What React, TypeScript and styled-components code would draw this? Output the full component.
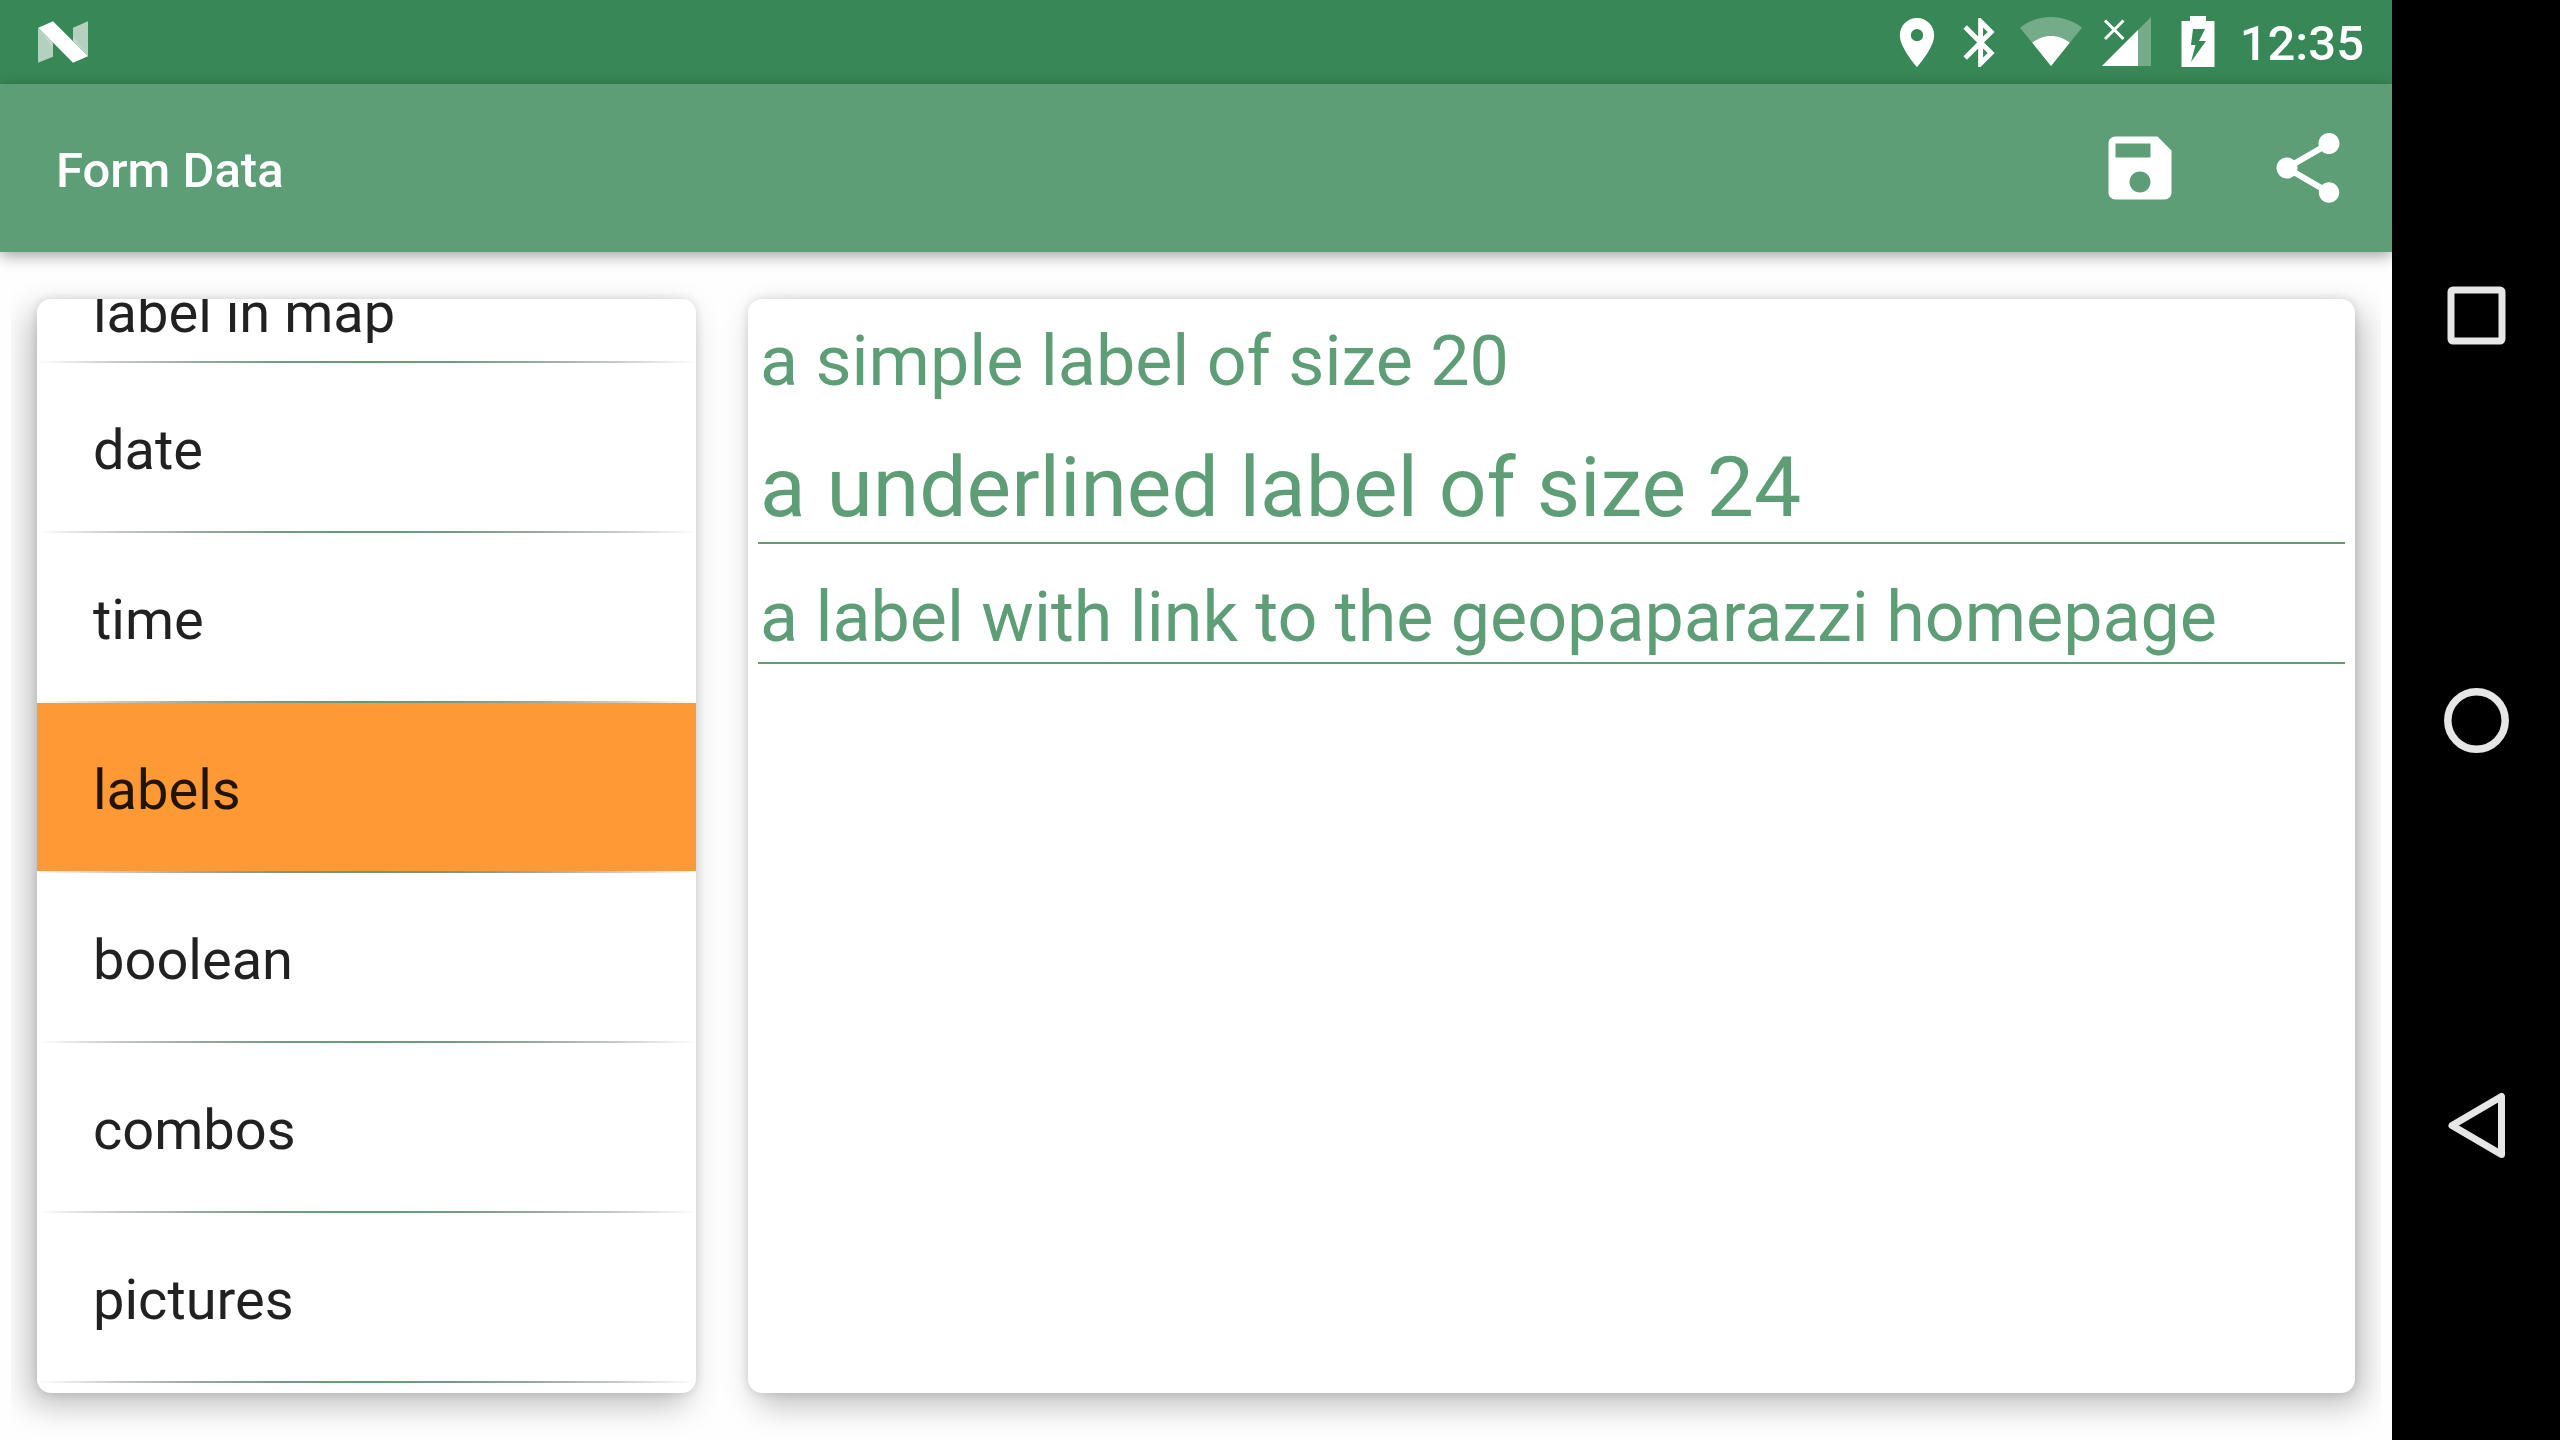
import React, { useState } from "react";
import styled, { createGlobalStyle } from "styled-components";

const GREEN = "#5e9e76";
const GREEN_DARK = "#388756";
const ORANGE = "#ff9933";
const NAV_ICON = "#e6e6e6";

const GlobalStyle = createGlobalStyle`
  * { box-sizing: border-box; }
  body {
    margin: 0;
    background: #fefefe;
    font-family: Roboto, "Liberation Sans", sans-serif;
    text-rendering: optimizeLegibility;
  }
  button {
    margin: 0;
    padding: 0;
    border: 0;
    background: none;
    color: inherit;
    font: inherit;
    cursor: pointer;
  }
`;

const Device = styled.div`
  display: flex;
  height: 100vh;
  overflow: hidden;
`;

const Screen = styled.div`
  flex: 1;
  min-width: 0;
  display: flex;
  flex-direction: column;
`;

const StatusBar = styled.header`
  flex: none;
  display: flex;
  align-items: center;
  justify-content: space-between;
  height: 84px;
  padding: 0 28px 0 38px;
  background: ${GREEN_DARK};
  color: #fff;
`;

const StatusIcons = styled.div`
  display: flex;
  align-items: center;
`;

const StatusIcon = styled.svg`
  display: block;
  height: 84px;
  fill: #fff;
`;

const Clock = styled.time`
  margin-left: 6px;
  font-size: 49px;
  font-weight: 500;
  line-height: 56px;
  padding-top: 4px;
`;

const Toolbar = styled.div`
  flex: none;
  display: flex;
  align-items: center;
  height: 168px;
  padding-left: 56px;
  background: ${GREEN};
  color: #fff;
  box-shadow: 0 4px 14px rgba(0, 0, 0, 0.36);
  z-index: 1;
`;

const Title = styled.h1`
  flex: 1;
  margin: 0;
  padding-top: 6px;
  font-size: 49px;
  font-weight: 500;
  line-height: 56px;
`;

const ActionButton = styled.button`
  display: flex;
  align-items: center;
  justify-content: center;
  width: 168px;
  height: 168px;

  svg {
    width: 84px;
    height: 84px;
    fill: #fff;
  }
`;

const Content = styled.main`
  flex: 1;
  min-height: 0;
  display: flex;
  margin: 0 11px;
  overflow: hidden;
`;

const Pane = styled.div<{ $share: number }>`
  flex: none;
  width: ${(p) => p.$share}%;
  display: flex;
  padding: 47px 26px;
`;

const Card = styled.section<{ $cast: "left" | "right" }>`
  flex: 1;
  min-width: 0;
  display: flex;
  flex-direction: column;
  overflow: hidden;
  border-radius: 14px;
  background: #fff;
  box-shadow:
    0 0 10px rgba(0, 0, 0, 0.12),
    ${(p) => (p.$cast === "left" ? "-8px" : "8px")} 12px 32px rgba(0, 0, 0, 0.26);
`;

const SectionList = styled.nav`
  flex: 1;
  min-height: 0;
  display: flex;
  flex-direction: column;
  justify-content: flex-end;
  padding-bottom: 10px;
`;

const SectionItem = styled.button<{ $selected: boolean; $lowered: boolean }>`
  flex: none;
  height: 168px;
  padding: ${(p) => (p.$lowered ? 72 : 6)}px 56px 0;
  background: ${(p) => (p.$selected ? ORANGE : "transparent")};
  color: rgba(0, 0, 0, 0.87);
  font-size: 56px;
  line-height: 64px;
  text-align: left;
`;

const Divider = styled.div`
  flex: none;
  height: 2px;
  background: linear-gradient(
    90deg,
    rgba(0, 0, 0, 0),
    rgba(23, 39, 29, 0.25) 12.5%,
    rgba(47, 79, 59, 0.5) 25%,
    rgba(70, 118, 88, 0.75) 37.5%,
    ${GREEN} 50%,
    rgba(70, 118, 88, 0.75) 62.5%,
    rgba(47, 79, 59, 0.5) 75%,
    rgba(23, 39, 29, 0.25) 87.5%,
    rgba(0, 0, 0, 0)
  );
`;

const Form = styled.div`
  display: flex;
  flex-direction: column;
  gap: 28px;
  padding: 17px 10px;
`;

const FormLabel = styled.div<{ $large?: boolean; $underlined?: boolean }>`
  padding-left: 2px;
  border-bottom: ${(p) => (p.$underlined ? `2px solid ${GREEN}` : "0")};
  color: ${GREEN};
  font-size: ${(p) => (p.$large ? 84 : 70)}px;
  line-height: ${(p) => (p.$large ? 108 : 90)}px;
`;

const Link = styled.a`
  color: inherit;
  text-decoration: none;
`;

const NavBar = styled.nav`
  flex: none;
  display: flex;
  flex-direction: column;
  width: 168px;
  padding: 113px 0;
  background: #000;
`;

const NavButton = styled.button`
  flex: 1;
  display: flex;
  align-items: center;
  justify-content: center;

  svg {
    width: 72px;
    height: 72px;
    fill: none;
    stroke: ${NAV_ICON};
    stroke-linejoin: round;
  }
`;

const sections = [
  { name: "label in map", lowered: true },
  { name: "date" },
  { name: "time" },
  { name: "labels" },
  { name: "boolean" },
  { name: "combos" },
  { name: "pictures" },
];

function NougatLogo() {
  return (
    <svg width="50" height="42" viewBox="114 63 150 126" fill="#fff" aria-hidden="true">
      <path d="M114 83L159 128V170L114 188Z" opacity=".62" />
      <path d="M264 169L219 123V83L264 64Z" opacity=".62" />
      <path d="M114 83L159 128V143Z" opacity=".2" />
      <path d="M264 169L219 123V108Z" opacity=".2" />
      <path d="M115 83L159 64L264 169L219 188Z" />
    </svg>
  );
}

function StatusTray() {
  return (
    <StatusIcons>
      <StatusIcon width="62" viewBox="0 0 62 84" aria-label="Location">
        <path
          transform="translate(1.6 13.1) scale(2.45)"
          d="M12 2C8.13 2 5 5.13 5 9c0 5.25 7 13 7 13s7-7.75 7-13c0-3.87-3.13-7-7-7zm0 9.5a2.5 2.5 0 0 1 0-5 2.5 2.5 0 0 1 0 5z"
        />
      </StatusIcon>
      <StatusIcon width="62" viewBox="0 0 62 84" aria-label="Bluetooth">
        <path
          transform="translate(3.2 13.1) scale(2.45)"
          d="M17.71 7.71L12 2h-1v7.59L6.41 5 5 6.41 10.59 12 5 17.59 6.41 19 11 14.41V22h1l5.71-5.71-4.3-4.29 4.3-4.29zM13 5.83l1.88 1.88L13 9.59V5.83zm1.88 10.46L13 18.17v-3.76l1.88 1.88z"
        />
      </StatusIcon>
      <StatusIcon width="82" viewBox="0 0 82 84" aria-label="Wi-Fi">
        <path d="M41 66L10 27.7C18 21.2 29 17 41 17S64 21.2 72 27.7Z" opacity=".3" />
        <path d="M41 66L22.3 42.7C27.5 38.5 34 36 41 36S54.5 38.5 59.7 42.7Z" />
      </StatusIcon>
      <StatusIcon width="70" viewBox="0 0 70 84" aria-label="No mobile signal">
        <path d="M59 17V66H10Z" opacity=".3" />
        <path d="M46 30V66H10Z" />
        <path d="M13 20.5L31.5 39M31.5 20.5L13 39" stroke="#fff" strokeWidth="3" />
      </StatusIcon>
      <StatusIcon width="72" viewBox="0 0 72 84" aria-label="Battery charging">
        <path
          fillRule="evenodd"
          d="M28 16H44V21H52.5V67H19.5V21H28ZM31 29L29 45H33.5L29 62L44 41H37L43 29Z"
        />
      </StatusIcon>
      <Clock>12:35</Clock>
    </StatusIcons>
  );
}

export default function App() {
  const [selected, setSelected] = useState("labels");

  return (
    <>
      <GlobalStyle />
      <Device>
        <Screen>
          <StatusBar>
            <NougatLogo />
            <StatusTray />
          </StatusBar>
          <Toolbar>
            <Title>Form Data</Title>
            <ActionButton type="button" aria-label="Save">
              <svg viewBox="0 0 24 24">
                <path d="M17 3H5c-1.11 0-2 .9-2 2v14c0 1.1.89 2 2 2h14c1.1 0 2-.9 2-2V7l-4-4zm-5 16c-1.66 0-3-1.34-3-3s1.34-3 3-3 3 1.34 3 3-1.34 3-3 3zm3-10H5V5h10v4z" />
              </svg>
            </ActionButton>
            <ActionButton type="button" aria-label="Share">
              <svg viewBox="0 0 24 24">
                <path d="M18 16.08c-.76 0-1.44.3-1.96.77L8.91 12.7c.05-.23.09-.46.09-.7s-.04-.47-.09-.7l7.05-4.11c.54.5 1.25.81 2.04.81 1.66 0 3-1.34 3-3s-1.34-3-3-3-3 1.34-3 3c0 .24.04.47.09.7L8.04 9.81C7.5 9.31 6.79 9 6 9c-1.66 0-3 1.34-3 3s1.34 3 3 3c.79 0 1.5-.31 2.04-.81l7.12 4.16c-.05.21-.08.43-.08.65 0 1.61 1.31 2.92 2.92 2.92s2.92-1.31 2.92-2.92-1.31-2.92-2.92-2.92z" />
              </svg>
            </ActionButton>
          </Toolbar>
          <Content>
            <Pane $share={30}>
              <Card $cast="left">
                <SectionList aria-label="Form sections">
                  {sections.map(({ name, lowered }) => (
                    <React.Fragment key={name}>
                      <SectionItem
                        type="button"
                        $selected={name === selected}
                        $lowered={Boolean(lowered)}
                        onClick={() => setSelected(name)}
                      >
                        {name}
                      </SectionItem>
                      <Divider />
                    </React.Fragment>
                  ))}
                </SectionList>
              </Card>
            </Pane>
            <Pane $share={70}>
              <Card $cast="right">
                <Form>
                  <FormLabel>a simple label of size 20</FormLabel>
                  <FormLabel $large $underlined>
                    a underlined label of size 24
                  </FormLabel>
                  <FormLabel $underlined>
                    <Link href="#homepage">a label with link to the geopaparazzi homepage</Link>
                  </FormLabel>
                </Form>
              </Card>
            </Pane>
          </Content>
        </Screen>
        <NavBar aria-label="System navigation">
          <NavButton type="button" aria-label="Recent apps">
            <svg viewBox="0 0 72 72">
              <rect x="11" y="11" width="51" height="51" rx="2" strokeWidth="7" />
            </svg>
          </NavButton>
          <NavButton type="button" aria-label="Home">
            <svg viewBox="0 0 72 72">
              <circle cx="36.5" cy="36.5" r="28.7" strokeWidth="7.5" />
            </svg>
          </NavButton>
          <NavButton type="button" aria-label="Back">
            <svg viewBox="0 0 72 72">
              <path d="M12 36.5L61.5 7.5V65.5Z" strokeWidth="7" />
            </svg>
          </NavButton>
        </NavBar>
      </Device>
    </>
  );
}
